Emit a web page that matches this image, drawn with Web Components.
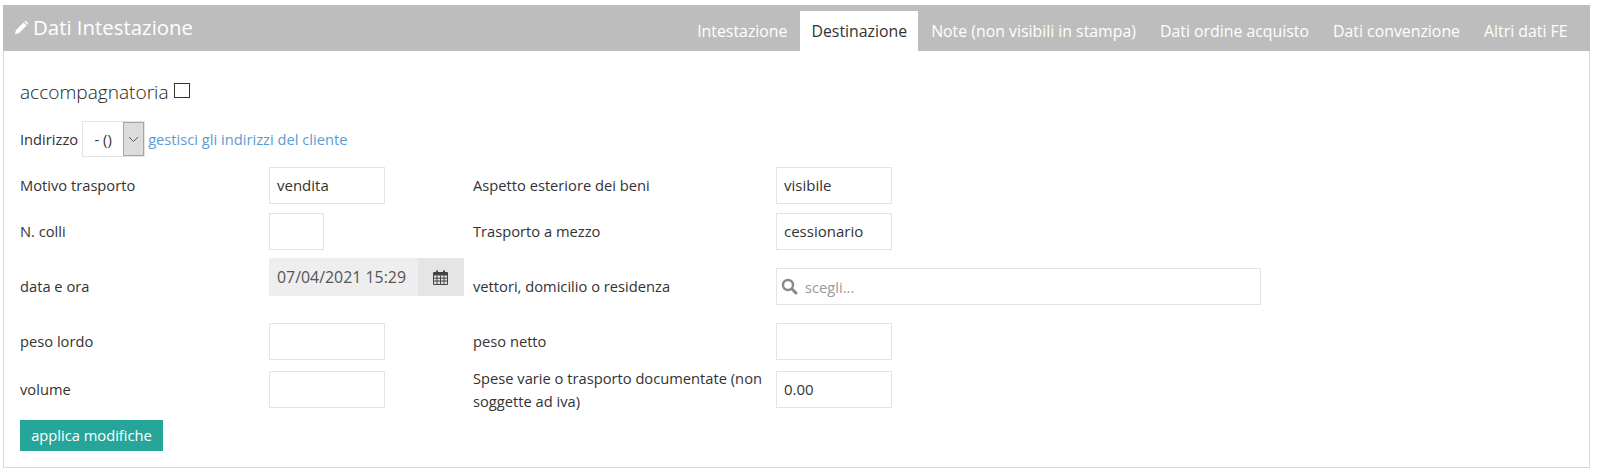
<!DOCTYPE html>
<html lang="it"><head><meta charset="utf-8"><title>Dati Intestazione</title>
<style>
html,body{margin:0;background:#fff}
body{font-family:"Open Sans",sans-serif;font-size:14.7px;color:#333}
</style></head><body>
<template id="t-panel"><style>
:host{display:block;box-sizing:border-box;margin:5px 7px 0 3px;width:1587px;height:463px;border:1px solid #d8d8d8;border-top:0;background:#fff}
.head{display:flex;justify-content:space-between;align-items:flex-end;height:46px;background:#bdbdbd;margin:0 -1px 0 -1px}
.title{align-self:center;display:flex;align-items:center;gap:5px;padding-left:11px;color:#fff;font-size:20.4px;line-height:26px;position:relative;top:-1px}
.tabs{display:flex;gap:2px;padding-right:11.500px}
.body{padding:27px 16px 0 16px}
</style><div class="head"><div class="title"><slot name="icon"></slot><slot name="title"></slot></div><div class="tabs"><slot name="tabs"></slot></div></div><div class="body"><slot></slot></div></template>

<template id="t-tab"><style>
:host{display:block;height:40px;line-height:40px;padding:0 11px;color:#fff;font-size:15.85px;white-space:nowrap}
:host([active]){background:#fff;color:#333}
</style><slot></slot></template>

<template id="t-row"><style>
:host{display:flex;align-items:center}
</style><slot></slot></template>

<template id="t-label"><style>
:host{display:block;flex:none;box-sizing:border-box;width:var(--w,249px);line-height:22.500px;font-size:14.7px;color:#333}
</style><slot></slot></template>

<template id="t-input"><style>
:host{display:block;flex:none;box-sizing:border-box;width:var(--w,116px);height:37px;border:1px solid #e4e4e4;background:#fff;padding:0 7px;line-height:35px;font-size:15px;color:#333;white-space:nowrap}
</style><slot></slot></template>

<template id="t-date"><style>
:host{display:flex;flex:none;width:195px;height:38px;background:#eee;font-size:15.9px;color:#555}
.v{flex:1;line-height:38px;padding-left:8px;white-space:nowrap}
.b{width:46px;padding-right:1px;box-sizing:border-box;background:#e5e5e5;display:flex;align-items:center;justify-content:center}
</style><div class="v"><slot></slot></div><div class="b"><slot name="icon"></slot></div></template>

<template id="t-select"><style>
:host{display:flex;flex:none;box-sizing:border-box;width:63px;height:36px;border:1px solid #e4e4e4;background:#fff;font-size:14.7px;color:#333}
.v{flex:1;text-align:center;line-height:34px;padding-left:0}
.b{box-sizing:border-box;width:21px;background:#dcdcdc;border:1px solid #a5a5a5;display:flex;align-items:center;justify-content:center}
</style><div class="v"><slot></slot></div><div class="b"><svg width="11" height="7" viewBox="0 0 11 7"><path d="M1 1l4.500 4.500L10 1" fill="none" stroke="#555" stroke-width="1"/></svg></div></template>

<template id="t-search"><style>
:host{display:flex;align-items:center;gap:7px;flex:none;box-sizing:border-box;width:485px;height:37px;border:1px solid #e4e4e4;background:#fff;padding-left:4px;font-size:14.7px;color:#999}
</style><slot name="icon"></slot><slot></slot></template>

<template id="t-button"><style>
:host{display:inline-block;box-sizing:border-box;width:143px;height:31px;line-height:31px;text-align:center;background:#26a69a;color:#fff;font-size:14.7px;white-space:nowrap}
</style><slot></slot></template>

<x-panel>
<svg slot="icon" width="14" height="14" viewBox="0 0 14 14" style="display:block;margin-top:2px"><path fill="#fff" d="M9.600 1.500l3 3-7.700 7.700-4 1 1-4zM10.500.7l.6-.5c.4-.3.9-.3 1.200 0l1.700 1.700c.3.300.3.800 0 1.200l-.6.6z"/></svg>
<span slot="title">Dati Intestazione</span>
<x-tab slot="tabs">Intestazione</x-tab>
<x-tab slot="tabs" active>Destinazione</x-tab>
<x-tab slot="tabs">Note (non visibili in stampa)</x-tab>
<x-tab slot="tabs">Dati ordine acquisto</x-tab>
<x-tab slot="tabs">Dati convenzione</x-tab>
<x-tab slot="tabs">Altri dati FE</x-tab>

<x-row style="height:28px;font-size:19.100px;font-weight:300;gap:5px;color:#222"><span>accompagnatoria</span><svg width="17" height="16" viewBox="0 0 17 16" style="margin-top:-2px"><rect x=".5" y=".5" width="15" height="14" fill="#fff" stroke="#333"/></svg></x-row>

<x-row style="margin-top:15px;gap:4px"><span>Indirizzo</span><x-select>- ()</x-select><span style="color:#5b9bd5;margin-left:-1px">gestisci gli indirizzi del cliente</span></x-row>

<x-row style="margin-top:10px"><x-label>Motivo trasporto</x-label><x-input>vendita</x-input><x-label style="margin-left:88px;--w:303px">Aspetto esteriore dei beni</x-label><x-input>visibile</x-input></x-row>

<x-row style="margin-top:9px"><x-label>N. colli</x-label><x-input style="--w:55px"></x-input><x-label style="margin-left:149px;--w:303px">Trasporto a mezzo</x-label><x-input>cessionario</x-input></x-row>

<x-row style="margin-top:8px;align-items:flex-start"><x-label style="margin-top:17px">data e ora</x-label><x-date>07/04/2021 15:29<svg slot="icon" width="15" height="16" viewBox="0 0 15 16"><path fill="#444" d="M1 3h2V1.500h2V3h5V1.500h2V3h2a1 1 0 0 1 1 1v11a1 1 0 0 1-1 1H1a1 1 0 0 1-1-1V4a1 1 0 0 1 1-1zm0 3.500v8.500h13V6.500z"/><path stroke="#444" stroke-width="1" d="M4 6.500V15M7.500 6.500V15M11 6.500V15M1 9.200h13M1 12h13"/></svg></x-date><x-label style="margin-left:9px;--w:303px;margin-top:17px">vettori, domicilio o residenza</x-label><x-search style="margin-top:10px"><svg slot="icon" width="17" height="17" viewBox="0 0 17 17"><circle cx="7" cy="7" r="5" fill="none" stroke="#888" stroke-width="2.400"/><path d="M10.800 10.800L15 15" stroke="#888" stroke-width="3" stroke-linecap="round"/></svg>scegli...</x-search></x-row>

<x-row style="margin-top:18px"><x-label>peso lordo</x-label><x-input></x-input><x-label style="margin-left:88px;--w:303px">peso netto</x-label><x-input></x-input></x-row>

<x-row style="margin-top:7px"><x-label>volume</x-label><x-input></x-input><x-label style="margin-left:88px;--w:297px;margin-right:6px">Spese varie o trasporto documentate (non soggette ad iva)</x-label><x-input>0.00</x-input></x-row>

<x-button style="margin-top:8px;display:block">applica modifiche</x-button>
</x-panel>
<script>
for (const [tag,id] of [['x-panel','t-panel'],['x-tab','t-tab'],['x-row','t-row'],['x-label','t-label'],['x-input','t-input'],['x-date','t-date'],['x-select','t-select'],['x-search','t-search'],['x-button','t-button']]) {
  customElements.define(tag, class extends HTMLElement {
    constructor(){super();this.attachShadow({mode:'open'}).appendChild(document.getElementById(id).content.cloneNode(true));}
  });
}
</script>
</body></html>
